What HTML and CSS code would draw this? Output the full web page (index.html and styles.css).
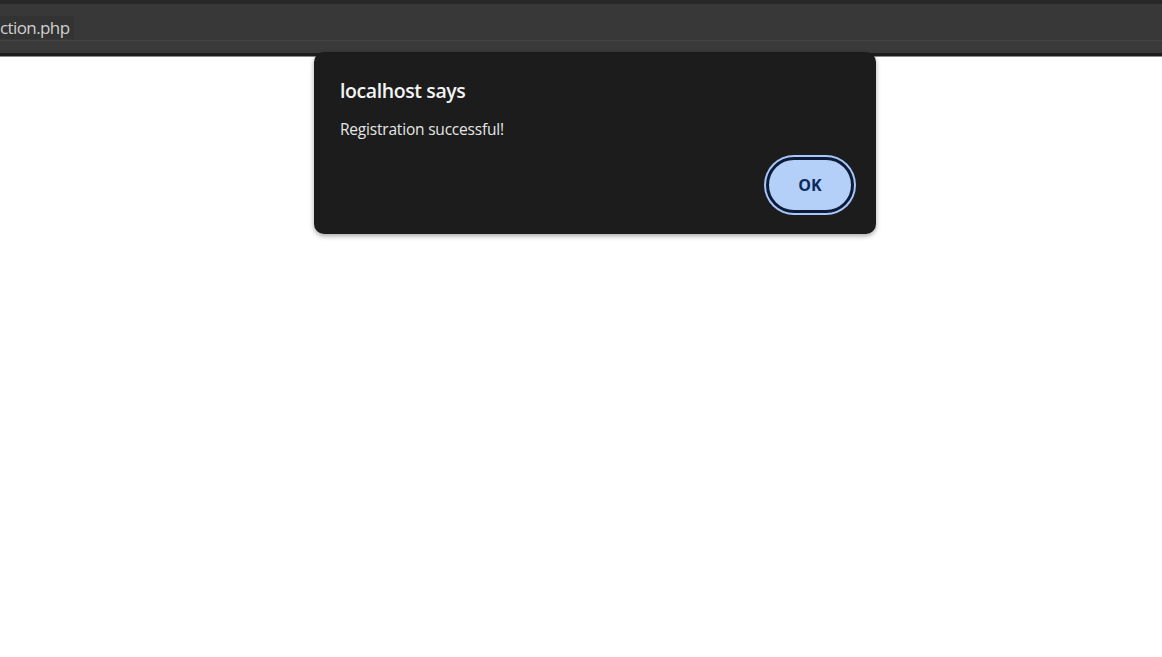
FILE: index.html
```html
<!DOCTYPE html>
<html>
<head>
<meta charset="utf-8">
<link rel="stylesheet" href="styles.css">
</head>
<body>
<header class="topbar">
  <div class="topbar-main">
    <span class="url">ction.php</span>
  </div>
  <div class="topbar-edge"></div>
</header>
<main class="page"></main>
<div class="dialog" role="alertdialog">
  <div class="dialog-title">localhost says</div>
  <div class="dialog-msg">Registration successful!</div>
  <div class="dialog-actions">
    <button class="ok-btn">OK</button>
  </div>
</div>
</body>
</html>
```
FILE: styles.css
```css
html, body {
  margin: 0;
  padding: 0;
  background: #ffffff;
  font-family: "Open Sans", "Noto Sans", "Liberation Sans", sans-serif;
}
.topbar {
  display: flex;
  flex-direction: column;
  height: 56px;
  background: #383838;
  border-top: 4px solid #272727;
  box-sizing: border-box;
}
.topbar-main {
  height: 36px;
  display: flex;
  align-items: flex-start;
  border-bottom: 1px solid #444444;
}
.url {
  color: #cfcfcf;
  font-size: 17px;
  letter-spacing: -0.6px;
  margin-top: 12px;
  line-height: 23px;
  background: #333333;
  padding-right: 5px;
}
.topbar-edge {
  flex: 1;
  background: #3a3a3a;
  border-bottom: 3px solid #1d1d1d;
  box-shadow: 0 1px 0 #8a8a8a;
}
.page {
  height: 601px;
}
.dialog {
  position: absolute;
  left: 314px;
  top: 52px;
  width: 562px;
  height: 182px;
  box-sizing: border-box;
  background: #1c1c1c;
  border-radius: 10px;
  box-shadow: 0 2px 5px rgba(0,0,0,0.35);
  padding: 0 22px 0 26px;
  display: flex;
  flex-direction: column;
}
.dialog-title {
  color: #f4f4f4;
  font-size: 19.5px;
  font-weight: 600;
  margin-top: 26px;
  line-height: 26px;
  letter-spacing: -0.4px;
}
.dialog-msg {
  color: #e6e6e6;
  font-size: 15.5px;
  margin-top: 15px;
  line-height: 20px;
  letter-spacing: -0.2px;
}
.dialog-actions {
  display: flex;
  justify-content: flex-end;
  margin-top: 18px;
}
.ok-btn {
  width: 88px;
  height: 56px;
  border-radius: 28px;
  border: 3px solid #0c1b38;
  background: #b5d0f8;
  box-shadow: 0 0 0 2px #a8c7fa;
  color: #0b2a5e;
  font-family: "Open Sans", "Noto Sans", sans-serif;
  font-weight: 700;
  font-size: 16px;
  padding: 0;
}
```
